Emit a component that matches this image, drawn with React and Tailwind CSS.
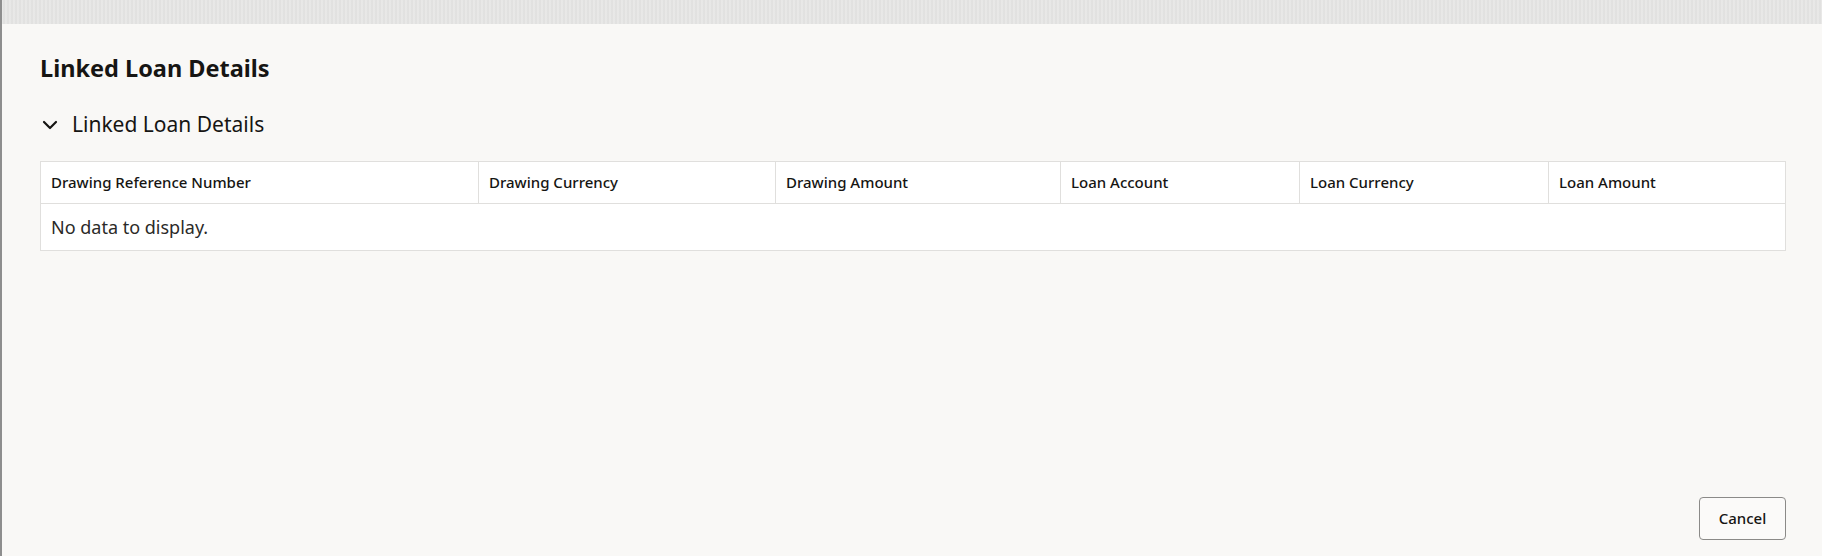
import React from 'react';

const columns = [
  { label: 'Drawing Reference Number', width: 'w-[437px]' },
  { label: 'Drawing Currency', width: 'w-[297px]' },
  { label: 'Drawing Amount', width: 'w-[285px]' },
  { label: 'Loan Account', width: 'w-[239px]' },
  { label: 'Loan Currency', width: 'w-[249px]' },
  { label: 'Loan Amount', width: '' },
];

const App = () => {
  return (
    <div
      className="w-[1822px] h-[556px] flex bg-[#9a9a9a] text-[#161513] overflow-hidden"
      style={{ fontFamily: '"Noto Sans", "Open Sans", sans-serif' }}
    >
      <div className="w-[2px] bg-[#8e8e8e]" />
      <div className="flex-1 flex flex-col">
        <div className="h-[24px] bg-[#e7e7e6] bg-[repeating-linear-gradient(90deg,#ebebea_0px,#dededd_2px,#ecebea_4px)]" />
        <div className="flex-1 flex flex-col bg-[#f9f8f6] pl-[38px] pr-[36px]">
          <h1 className="mt-[29px] text-[23.5px] leading-[30px] font-bold">Linked Loan Details</h1>

          <div className="mt-[27px] flex items-center h-[30px]">
            <svg width="16" height="10" viewBox="0 0 16 10" className="ml-[2px] mr-[14px]">
              <path d="M2 2l6 6 6-6" fill="none" stroke="#161513" strokeWidth="2.2" strokeLinecap="round" strokeLinejoin="round" />
            </svg>
            <span className="text-[21px]">Linked Loan Details</span>
          </div>

          <div className="mt-[21px] border border-[#e0dfdd] bg-white">
            <div className="flex h-[42px] border-b border-[#e0dfdd]">
              {columns.map((col, i) => (
                <div
                  key={col.label}
                  className={`${col.width} ${col.width ? '' : 'flex-1'} ${i > 0 ? 'border-l border-[#e0dfdd]' : ''} flex items-center px-[10px] text-[15px] font-medium`}
                >
                  {col.label}
                </div>
              ))}
            </div>
            <div className="h-[46px] flex items-center px-[10px] text-[18px] text-[#2b2a28]">
              No data to display.
            </div>
          </div>

          <div className="flex-1" />

          <div className="flex justify-end mb-[16px]">
            <button className="w-[87px] h-[43px] rounded-[4px] border border-[#8b8a88] bg-[#fbfaf9] text-[15px] font-medium text-[#161513]">
              Cancel
            </button>
          </div>
        </div>
      </div>
    </div>
  );
};

export default App;
